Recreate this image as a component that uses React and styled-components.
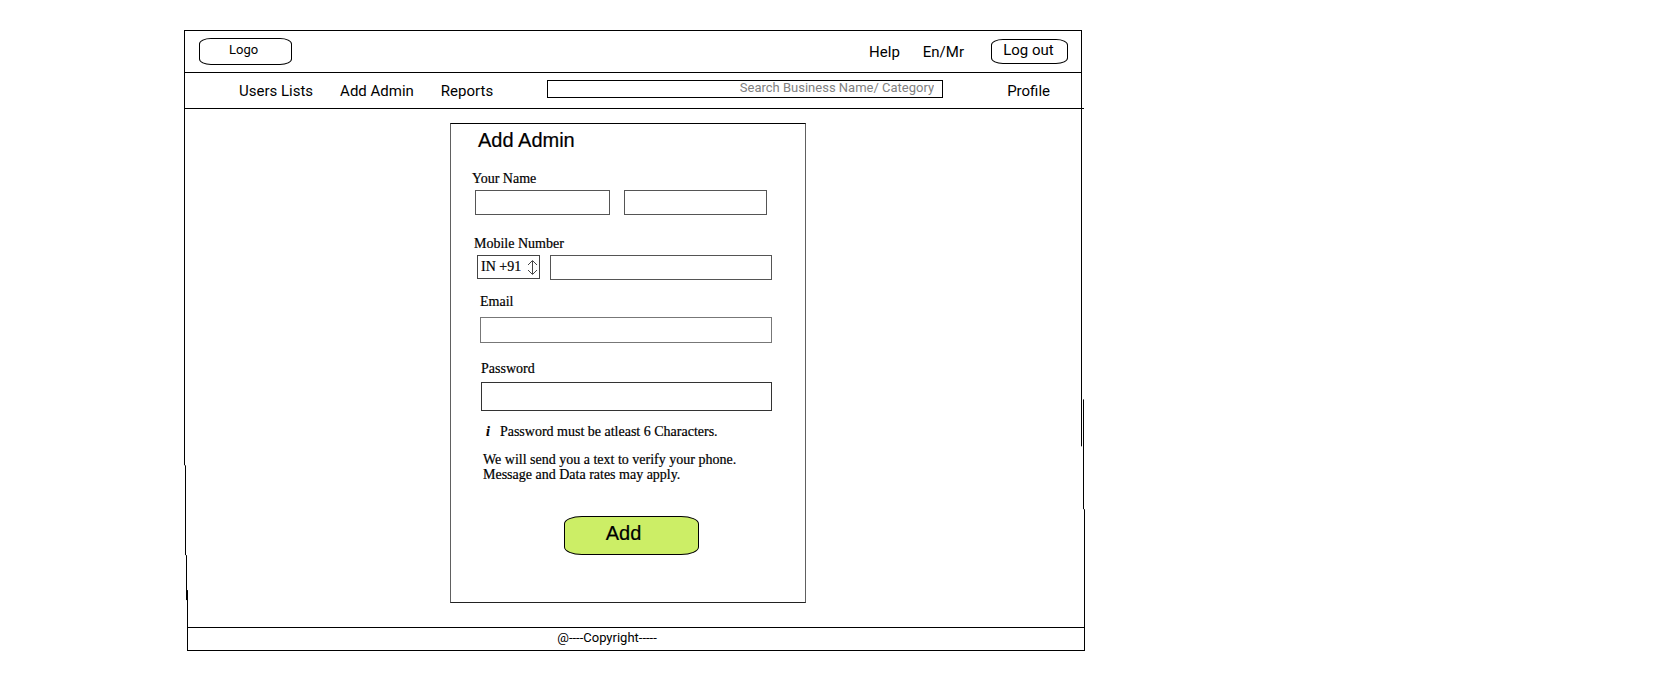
import React from "react";
import styled, { createGlobalStyle } from "styled-components";

const GlobalStyle = createGlobalStyle`
  *, *::before, *::after { box-sizing: border-box; }
  body {
    margin: 0;
    background: #fff;
    color: #000;
    font-family: Roboto, "Liberation Sans", sans-serif;
    font-size: 15px;
    line-height: 20px;
  }
  input, select, button { font: inherit; color: inherit; }
`;

const Page = styled.div`
  display: grid;
  grid-template-columns: 184fr minmax(760px, 898fr) 598fr;
  padding: 30px 0 48px;
`;

const Shell = styled.div`
  grid-column: 2;
  position: relative;
`;

const TopBar = styled.header`
  display: flex;
  align-items: center;
  height: 43px;
  padding: 0 14px 0 15px;
  border-top: 1px solid #000;
  border-bottom: 1px solid #000;
`;

const Logo = styled.a`
  display: block;
  width: 93px;
  height: 27px;
  padding: 1px 0 0 29px;
  border: 1px solid #000;
  border-radius: 12px / 6px;
  font-size: 13px;
  color: inherit;
  text-decoration: none;
`;

const TopLinks = styled.div`
  display: flex;
  align-items: center;
  gap: 23px;
  margin-left: auto;
`;

const TextLink = styled.a`
  color: inherit;
  text-decoration: none;
  white-space: nowrap;
`;

const LogoutButton = styled.button`
  width: 77px;
  height: 25px;
  margin-left: 4px;
  padding: 0 2px 3px 0;
  border: 1px solid #000;
  border-radius: 12px / 6px;
  background: #fff;
  line-height: 20px;
`;

const NavBar = styled.nav`
  display: flex;
  align-items: center;
  height: 36px;
  margin-right: -2px;
  padding: 0 34px 0 55px;
  border-bottom: 1px solid #000;
`;

const NavLinks = styled.div`
  display: flex;
  gap: 27px;
`;

const SearchBox = styled.input`
  flex: 1;
  min-width: 0;
  height: 18px;
  margin: 0 64px 4px 54px;
  padding: 0 8px 2px;
  border: 1px solid #000;
  border-radius: 0;
  background: #fff;
  font-size: 13px;
  text-align: right;
  &::placeholder { color: #808080; opacity: 1; }
`;

const Main = styled.main`
  display: flex;
  justify-content: center;
  padding: 14px 10px 24px 0;
`;

const Card = styled.form`
  width: 356px;
  padding: 6px 33px 47px 21px;
  border: 1px solid #606060;
  border-top-color: #000;
  border-bottom-color: #222;
  font-family: "Liberation Serif", serif;
  font-size: 14px;
  line-height: 15px;
  -webkit-text-stroke: 0.2px #000;
`;

const Title = styled.h1`
  margin: 0 0 21px 6px;
  font: 400 20px/20px "Liberation Sans", sans-serif;
`;

const Field = styled.div`
  margin: 0 0 ${(p) => p.$after}px ${(p) => p.$indent || 0}px;
`;

const Label = styled.label`
  display: block;
  margin-bottom: ${(p) => p.$gap}px;
`;

const Row = styled.div`
  display: flex;
  gap: ${(p) => p.$gap}px;
  padding: 0 ${(p) => p.$end || 0}px 0 3px;
`;

const TextInput = styled.input`
  display: block;
  flex: ${(p) => p.$grow || 1} 1 0;
  width: 100%;
  min-width: 0;
  height: ${(p) => p.$tall || 25}px;
  padding: 0 6px;
  border: 1px solid ${(p) => p.$line || "#555"};
  border-radius: 0;
  background: #fff;
`;

const CodePicker = styled.div`
  position: relative;
  width: 63px;
`;

const CodeSelect = styled.select`
  appearance: none;
  width: 100%;
  height: 24px;
  padding: 0 0 2px 3px;
  border: 1px solid #444;
  border-radius: 0;
  background: #fff;
`;

const Arrows = styled.svg`
  position: absolute;
  right: 2px;
  top: 5px;
  pointer-events: none;
`;

const Hint = styled.p`
  display: flex;
  gap: 10px;
  margin: 0 0 13px 14px;
  white-space: nowrap;
`;

const Notice = styled.p`
  margin: 0 0 34px 11px;
  white-space: nowrap;
`;

const AddButton = styled.button`
  display: block;
  width: 135px;
  height: 39px;
  margin-left: 92px;
  padding: 0 16px 6px 0;
  border: 1px solid #000;
  border-radius: 18px / 8px;
  background: #ccee66;
  font: 400 20px/20px "Liberation Sans", sans-serif;
`;

const Footer = styled.footer`
  height: 24px;
  margin: 0 -3px 0 3px;
  border: solid #000;
  border-width: 1px 0;
  padding-right: 58px;
  font-size: 13px;
  text-align: center;
`;

const SideLine = styled.svg`
  position: absolute;
  top: 0;
  ${(p) => p.$side}: ${(p) => (p.$side === "left" ? 0 : -3)}px;
  width: 4px;
  height: 100%;
  pointer-events: none;
`;

export default function App() {
  return (
    <>
      <GlobalStyle />
      <Page>
        <Shell>
          <TopBar>
            <Logo href="#home">Logo</Logo>
            <TopLinks>
              <TextLink href="#help">Help</TextLink>
              <TextLink href="#language">En/Mr</TextLink>
              <LogoutButton type="button">Log out</LogoutButton>
            </TopLinks>
          </TopBar>
          <NavBar>
            <NavLinks>
              <TextLink href="#users">Users Lists</TextLink>
              <TextLink href="#add-admin">Add Admin</TextLink>
              <TextLink href="#reports">Reports</TextLink>
            </NavLinks>
            <SearchBox
              type="text"
              aria-label="Search"
              placeholder="Search Business Name/ Category"
            />
            <TextLink href="#profile">Profile</TextLink>
          </NavBar>

          <Main>
            <Card onSubmit={(e) => e.preventDefault()}>
              <Title>Add Admin</Title>

              <Field $after={21}>
                <Label htmlFor="first-name" $gap={4}>Your Name</Label>
                <Row $gap={14} $end={5}>
                  <TextInput id="first-name" $grow={16} />
                  <TextInput aria-label="Last name" $grow={17} />
                </Row>
              </Field>

              <Field $indent={2} $after={14}>
                <Label htmlFor="mobile" $gap={4}>Mobile Number</Label>
                <Row $gap={10}>
                  <CodePicker>
                    <CodeSelect aria-label="Country code">
                      <option>IN +91</option>
                    </CodeSelect>
                    <Arrows width="11" height="15" viewBox="0 0 11 15" fill="none" stroke="#444">
                      <path d="M5.5 1v13M1 5l4.500-4.500L10 5M1 10l4.500 4.500L10 10" />
                    </Arrows>
                  </CodePicker>
                  <TextInput id="mobile" type="tel" />
                </Row>
              </Field>

              <Field $indent={8} $after={18}>
                <Label htmlFor="email" $gap={8}>Email</Label>
                <TextInput id="email" type="email" $tall={26} $line="#777" />
              </Field>

              <Field $indent={9} $after={13}>
                <Label htmlFor="password" $gap={6}>Password</Label>
                <TextInput id="password" type="password" $tall={29} $line="#333" />
              </Field>

              <Hint>
                <b><i>i</i></b>
                <span>Password must be atleast 6 Characters.</span>
              </Hint>
              <Notice>
                We will send you a text to verify your phone.
                <br />
                Message and Data rates may apply.
              </Notice>
              <AddButton type="submit">Add</AddButton>
            </Card>
          </Main>

          <Footer>@----Copyright-----</Footer>

          <SideLine $side="left" viewBox="0 0 4 622" preserveAspectRatio="none" fill="none" stroke="#000" shapeRendering="crispEdges">
            <path d="M.5 0v436M1.500 436v90M2.500 526v45M3.500 561v61" />
          </SideLine>
          <SideLine $side="right" viewBox="0 0 4 622" preserveAspectRatio="none" fill="none" stroke="#000" shapeRendering="crispEdges">
            <path d="M.5 0v417M2.500 370v110M3.500 480v142" />
          </SideLine>
        </Shell>
      </Page>
    </>
  );
}
